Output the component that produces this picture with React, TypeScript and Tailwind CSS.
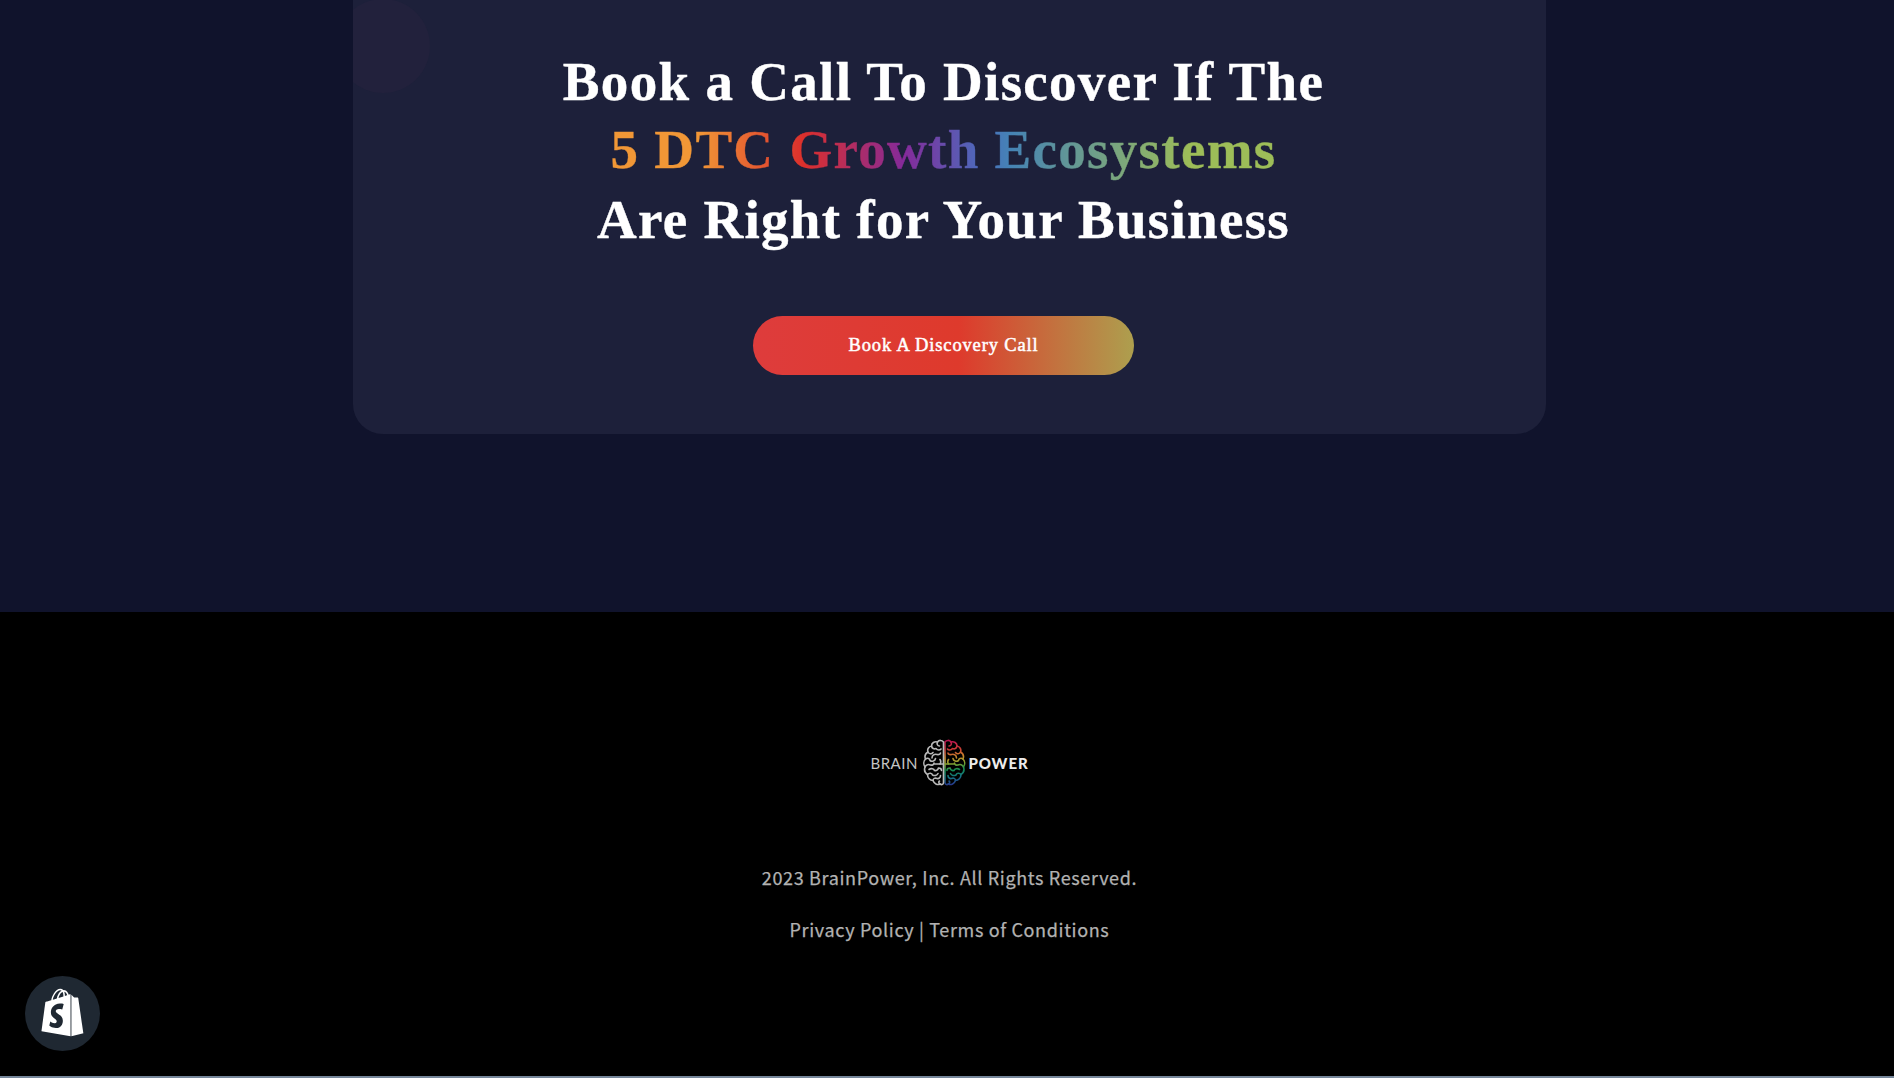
import { FaShopify } from "react-icons/fa";

const leftFolds = [
  "M20.500 3C19 1 16 .8 14.500 3C11.500 2 8.500 4 8.500 7C5.500 7.500 4 10.500 5 13C2.500 14.500 1.500 17.500 2.500 20C.5 22 .3 25.500 2 28C1 31 2 34 4.500 35.500C4.500 39 7 41.500 10 41.500C11 44.500 14.500 46.500 17 45C19 46.500 20.500 45 20.500 43.500Z",
  "M14.500 3C13.500 5 14.500 7 16.500 7",
  "M8.500 7C9 9.500 11 10.500 13 9.500M13 9.500C14.500 11.500 17 11.500 18 10",
  "M5 13C6 15 8.500 15.500 10 13.500",
  "M9 19C9 16.500 11.500 14.500 14 15.500C16 16 17.500 15 17.500 14",
  "M2.500 20C4.500 18.500 7 19.500 7 21.500C9 23 12 22 12.500 19.500",
  "M2 28C3 25.500 5.500 25 7.500 26C9.500 26.500 11 25.500 11 24M11 25H20",
  "M17 25C18 23.500 18 22 17 20.500",
  "M6 30.500C8 29 11 29.500 11.500 31.500C13.500 32 15 31 15.500 29C17.500 29 18.500 30 18.500 31.500",
  "M4.500 35.500C6 33.500 9 34 9.500 36C11.500 37 14 36.500 15 34.500",
  "M10 41.500C10 39.500 12 38.500 14 39.500C16 40 17.500 38.500 17.500 36.500",
  "M17 45C15.500 44 15.500 42.500 16.500 42",
];

function Brain() {
  return (
    <svg className="h-[48px] w-[43px] shrink-0" viewBox="0 0 43 48" fill="none" strokeWidth="1.6" strokeLinecap="round">
      <defs>
        <linearGradient id="spectrum" gradientUnits="userSpaceOnUse" x1="17" y1="2" x2="12" y2="46">
          <stop offset="0" stopColor="#b8144f" />
          <stop offset=".2" stopColor="#c93c35" />
          <stop offset=".38" stopColor="#c98a2b" />
          <stop offset=".52" stopColor="#84a231" />
          <stop offset=".66" stopColor="#138c50" />
          <stop offset=".82" stopColor="#157382" />
          <stop offset="1" stopColor="#28348c" />
        </linearGradient>
      </defs>
      <g stroke="url(#spectrum)" transform="translate(42.500 0) scale(-1 1)">
        {leftFolds.map((d) => <path key={d} d={d} />)}
      </g>
      <g stroke="#b8b8b8">
        {leftFolds.map((d) => <path key={d} d={d} />)}
      </g>
    </svg>
  );
}

export default function App() {
  return (
    <div className="flex h-[1078px] w-full flex-col overflow-hidden bg-black">
      <section className="h-[612px] shrink-0 bg-[#10132c]">
        <div className="relative ml-[353px] h-[434px] w-[1193px] overflow-hidden rounded-b-[30px] bg-[#1d203a] pr-[12px] text-center font-['Liberation_Serif',serif]">
          <div className="absolute -left-[17px] -top-[1px] size-[94px] rounded-full bg-[#22213c]" />
          <h2 className="relative pt-[48px] text-[55px] font-bold tracking-[1.3px] text-white [-webkit-text-stroke-width:0.4px]">
            <span className="block leading-[68px]">Book a Call To Discover If The</span>
            <span className="mx-auto block w-fit bg-[linear-gradient(90deg,#f19736_13%,#dc2f2c_29%,#852a9a_44%,#4a6dbd_56%,#4583b5_60%,#9dbd58_87%)] bg-clip-text leading-[67px] text-transparent">
              5 DTC Growth Ecosystems
            </span>
            <span className="block leading-[74px]">Are Right for Your Business</span>
          </h2>
          <button className="mt-[59px] h-[59px] w-[381px] rounded-full bg-[linear-gradient(90deg,#de3c3c_0%,#de3a2c_54%,#ad9f4e_100%)] pt-[1px] text-[18.5px] tracking-[0.85px] text-white [-webkit-text-stroke:0.5px_white]">
            Book A Discovery Call
          </button>
        </div>
      </section>
      <footer className="flex grow flex-col items-center border-b-2 border-[#75869a] bg-black pt-[127px] pl-[5px] text-[#b2b2b2]">
        <div className="flex h-[48px] items-center font-['Lato',sans-serif] text-[15px] leading-none text-[#c4c4c4]">
          <span className="w-[52px] tracking-[0.5px]">BRAIN</span>
          <Brain />
          <span className="ml-[3px] w-[60px] font-black tracking-[0.9px] text-[#ececec]">POWER</span>
        </div>
        <div className="mt-[76px] flex flex-col items-center gap-[24px] font-['Noto_Sans_CJK_SC',sans-serif] text-[18px] leading-[28px] tracking-[0.65px] [-webkit-text-stroke-width:0.25px]">
          <p>2023 BrainPower, Inc. All Rights Reserved.</p>
          <p>Privacy Policy | Terms of Conditions</p>
        </div>
      </footer>
      <a aria-label="Shopify" className="fixed bottom-[27px] left-[25px] flex size-[75px] items-center justify-center rounded-full bg-[#1f2832] pb-[2px] text-white">
        <FaShopify size={49} />
      </a>
    </div>
  );
}
